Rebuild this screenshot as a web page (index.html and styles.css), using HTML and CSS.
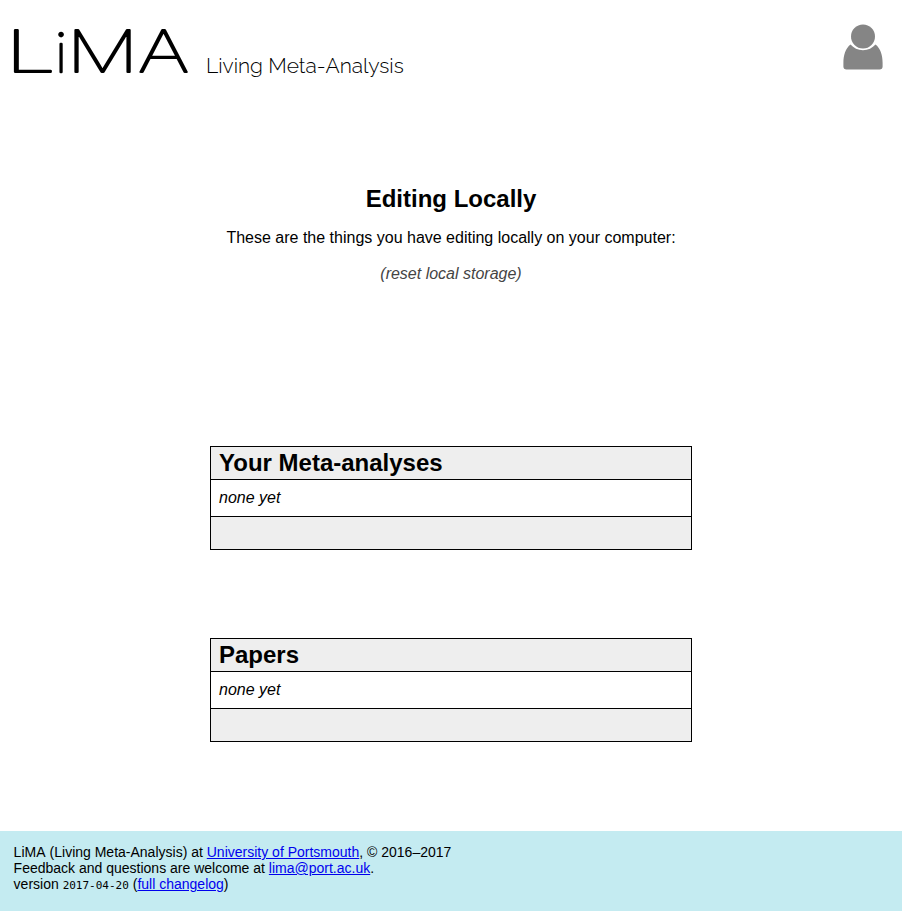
FILE: index.html
```html
<!DOCTYPE html>
<html lang="en">
<head>
<meta charset="utf-8">
<title>Living Meta-Analysis</title>
<link rel="stylesheet" href="styles.css">
</head>
<body>
<header class="site-header">
  <a class="brand">
    <svg class="logo" width="190" height="60" viewBox="0 0 190 60">
      <text transform="translate(5 57.800) scale(1.57 1)">L</text>
      <text class="logo-i" transform="translate(55.200 57.500)">i</text>
      <text transform="translate(66.500 57.800) scale(1.39 1)">M</text>
      <text transform="translate(138 57.800) scale(1.38 1)">A</text>
    </svg>
    <span class="tagline">Living Meta-Analysis</span>
  </a>
  <svg class="user" width="42" height="48" viewBox="0 0 42 48">
    <circle cx="21" cy="13.5" r="12"/>
    <path d="M8.5 21.5C3.5 25.5 1.4 32 1.4 40v3.5Q1.4 46.5 4.5 46.5h33Q40.600 46.500 40.600 43.500V40C40.600 32 38.500 25.500 33.500 21.500C30.500 25 26 27.200 21 27.200S11.500 25 8.500 21.500z"/>
  </svg>
</header>
<main>
  <section class="intro">
    <h1>Editing Locally</h1>
    <p>These are the things you have editing locally on your computer:</p>
    <p class="reset">(reset local storage)</p>
  </section>
  <section class="list">
    <h2>Your Meta-analyses</h2>
    <p>none yet</p>
    <div class="list-end"></div>
  </section>
  <section class="list">
    <h2>Papers</h2>
    <p>none yet</p>
    <div class="list-end"></div>
  </section>
</main>
<footer>
  <div><span class="name">LiMA</span> (Living Meta-Analysis) at <a href="#">University of Portsmouth</a>, © 2016–2017</div>
  <div>Feedback and questions are welcome at <a href="#">lima@port.ac.uk</a>.</div>
  <div>version <code>2017-04-20</code> (<a href="#">full changelog</a>)</div>
</footer>
</body>
</html>
```
FILE: styles.css
```css
* { box-sizing: border-box; }
body {
  margin: 0;
  height: 911px;
  display: flex;
  flex-direction: column;
  background: #fff;
  color: #000;
  font: 16px/18px "Liberation Sans", Arial, sans-serif;
}
.site-header {
  height: 185px;
  padding: 14px 18px 0 0;
  display: flex;
  justify-content: space-between;
  align-items: flex-start;
}
.brand { display: flex; }
.logo {
  font: 100 58px Inter, sans-serif;
  overflow: visible;
  stroke: #000;
  stroke-width: 1.8px;
  stroke-linejoin: round;
}
.logo-i { font: 100 56px Lato, sans-serif; stroke-width: 2.6px; }
.tagline {
  margin: 39px 0 0 16px;
  font: 300 21px/26px Raleway, Lato, sans-serif;
  white-space: nowrap;
}
.user { margin-top: 9px; fill: #858585; }
main { flex: 1; }
.intro { height: 261px; text-align: center; }
h1, h2 { margin: 0; font-size: 24px; font-weight: bold; }
h1 { line-height: 28px; }
.intro p { margin: 16px 0 0; line-height: 20px; }
.intro h1 + p { margin-top: 15px; }
.intro .reset { color: #444; font-style: italic; }
.list {
  width: 482px;
  height: 104px;
  margin: 0 auto 88px;
  border: 1px solid #000;
}
h2 { height: 32px; padding-left: 8px; line-height: 32px; background: #eee; }
.list p {
  height: 38px;
  margin: 0;
  padding-left: 8px;
  border: solid #000;
  border-width: 1px 0;
  font-style: italic;
  line-height: 36px;
}
.list-end { height: 32px; background: #eee; }
footer {
  height: 80px;
  padding: 13px 13.6px;
  background: #c4ebf1;
  font-size: 14px;
  line-height: 16px;
}
footer a { color: #00e; }
.name { margin-right: 0.2px; }
code { font: 11px/1 "DejaVu Sans Mono", monospace; }
```
